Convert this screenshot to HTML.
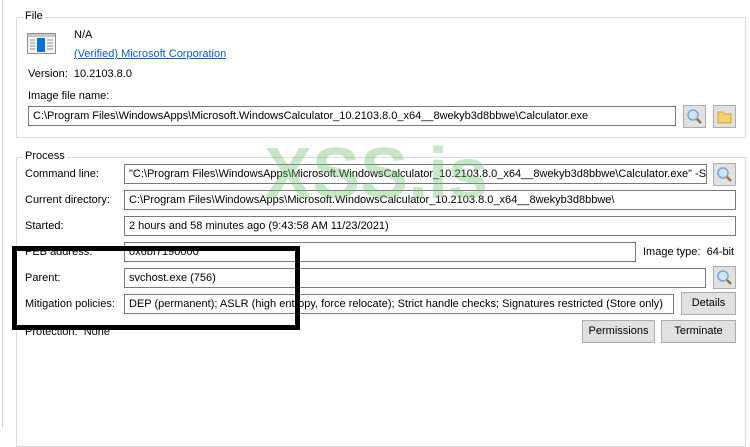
<!DOCTYPE html>
<html><head><meta charset="utf-8"><style>
*{box-sizing:border-box;margin:0;padding:0}
body{width:750px;height:428px;background:#fff;font-family:"Liberation Sans",sans-serif;font-size:11px;color:#000;position:relative;overflow:hidden}
.a{position:absolute;white-space:nowrap}
.grp{position:absolute;border:1px solid #dcdcdc}
.lg{position:absolute;background:#fff;padding:0 2px;font-size:11px}
.tb{position:absolute;border:1px solid #7a7a7a;background:#fff;height:20px;padding:2px 4px;white-space:nowrap;overflow:hidden;line-height:15px}
.btn{position:absolute;border:1px solid #adadad;background:#e1e1e1;text-align:center;line-height:20px}
.ib{position:absolute;width:23px;height:23px;border:1px solid #adadad;background:#e1e1e1}
</style></head><body>
<div class="a" style="left:2px;top:0;width:1px;height:428px;background:#d0d0d0"></div>
<div class="grp" style="left:16px;top:17px;width:730px;height:121px"></div>
<div class="lg" style="left:23px;top:10px">File</div>
<svg class="a" style="left:27px;top:33px" width="29" height="21" viewBox="0 0 29 21">
<rect x="0.5" y="0.5" width="28" height="20" fill="#f4f4f4" stroke="#909090"/>
<rect x="1" y="1" width="27" height="3" fill="#c8c8c8"/>
<rect x="10" y="5" width="8" height="14" fill="#0a6fd8"/>
<path d="M3 7h5M3 10h5M3 13h5M3 16h5M20 7h6M20 10h6M20 13h6M20 16h6" stroke="#909090"/>
</svg>
<div class="a" style="left:74px;top:29px">N/A</div>
<div class="a" style="left:74px;top:48px;color:#0a5cc8;text-decoration:underline">(Verified) Microsoft Corporation</div>
<div class="a" style="left:28px;top:68px">Version:&nbsp; 10.2103.8.0</div>
<div class="a" style="left:28px;top:90px">Image file name:</div>
<div class="tb" style="left:28px;top:106px;width:648px">C:\Program Files\WindowsApps\Microsoft.WindowsCalculator_10.2103.8.0_x64__8wekyb3d8bbwe\Calculator.exe</div>
<div class="ib" style="left:683px;top:105px"><svg width="21" height="21"><circle cx="9" cy="9" r="5" fill="#cfe4f7" stroke="#7aa7d0" stroke-width="1.5"/><path d="M13 13l4 4" stroke="#a07030" stroke-width="2.5"/></svg></div>
<div class="ib" style="left:713px;top:105px"><svg width="21" height="21"><path d="M4 6h5l1 2h7v9H4z" fill="#f3d36b" stroke="#d4a73a"/></svg></div>

<div class="grp" style="left:16px;top:157px;width:730px;height:290px"></div>
<div class="lg" style="left:23px;top:150px">Process</div>
<div class="a" style="left:25px;top:168px">Command line:</div>
<div class="tb" style="left:124px;top:164px;width:583px">"C:\Program Files\WindowsApps\Microsoft.WindowsCalculator_10.2103.8.0_x64__8wekyb3d8bbwe\Calculator.exe" -ServerName:App</div>
<div class="ib" style="left:713px;top:163px"><svg width="21" height="21"><circle cx="9" cy="9" r="5" fill="#cfe4f7" stroke="#7aa7d0" stroke-width="1.5"/><path d="M13 13l4 4" stroke="#a07030" stroke-width="2.5"/></svg></div>
<div class="a" style="left:25px;top:194px">Current directory:</div>
<div class="tb" style="left:124px;top:190px;width:612px">C:\Program Files\WindowsApps\Microsoft.WindowsCalculator_10.2103.8.0_x64__8wekyb3d8bbwe\</div>
<div class="a" style="left:25px;top:220px">Started:</div>
<div class="tb" style="left:124px;top:216px;width:612px">2 hours and 58 minutes ago (9:43:58 AM 11/23/2021)</div>
<div class="a" style="left:25px;top:246px">PEB address:</div>
<div class="tb" style="left:124px;top:242px;width:512px">0x6bf7190000</div>
<div class="a" style="left:643px;top:246px">Image type:&nbsp; 64-bit</div>
<div class="a" style="left:25px;top:272px">Parent:</div>
<div class="tb" style="left:124px;top:268px;width:582px">svchost.exe (756)</div>
<div class="ib" style="left:713px;top:266px"><svg width="21" height="21"><circle cx="9" cy="9" r="5" fill="#cfe4f7" stroke="#7aa7d0" stroke-width="1.5"/><path d="M13 13l4 4" stroke="#a07030" stroke-width="2.5"/></svg></div>
<div class="a" style="left:25px;top:298px">Mitigation policies:</div>
<div class="tb" style="left:124px;top:294px;width:550px">DEP (permanent); ASLR (high entropy, force relocate); Strict handle checks; Signatures restricted (Store only)</div>
<div class="btn" style="left:681px;top:292px;width:55px;height:23px">Details</div>
<div class="a" style="left:25px;top:326px">Protection:&nbsp; None</div>
<div class="btn" style="left:582px;top:320px;width:73px;height:23px">Permissions</div>
<div class="btn" style="left:661px;top:320px;width:75px;height:23px">Terminate</div>

<div class="a" style="left:12px;top:246px;width:288px;height:84px;border:5px solid #000"></div>
<div class="a" style="left:264px;top:133px;font-size:72px;font-weight:bold;color:rgba(110,190,110,0.38);letter-spacing:0px">XSS.is</div>
</body></html>
